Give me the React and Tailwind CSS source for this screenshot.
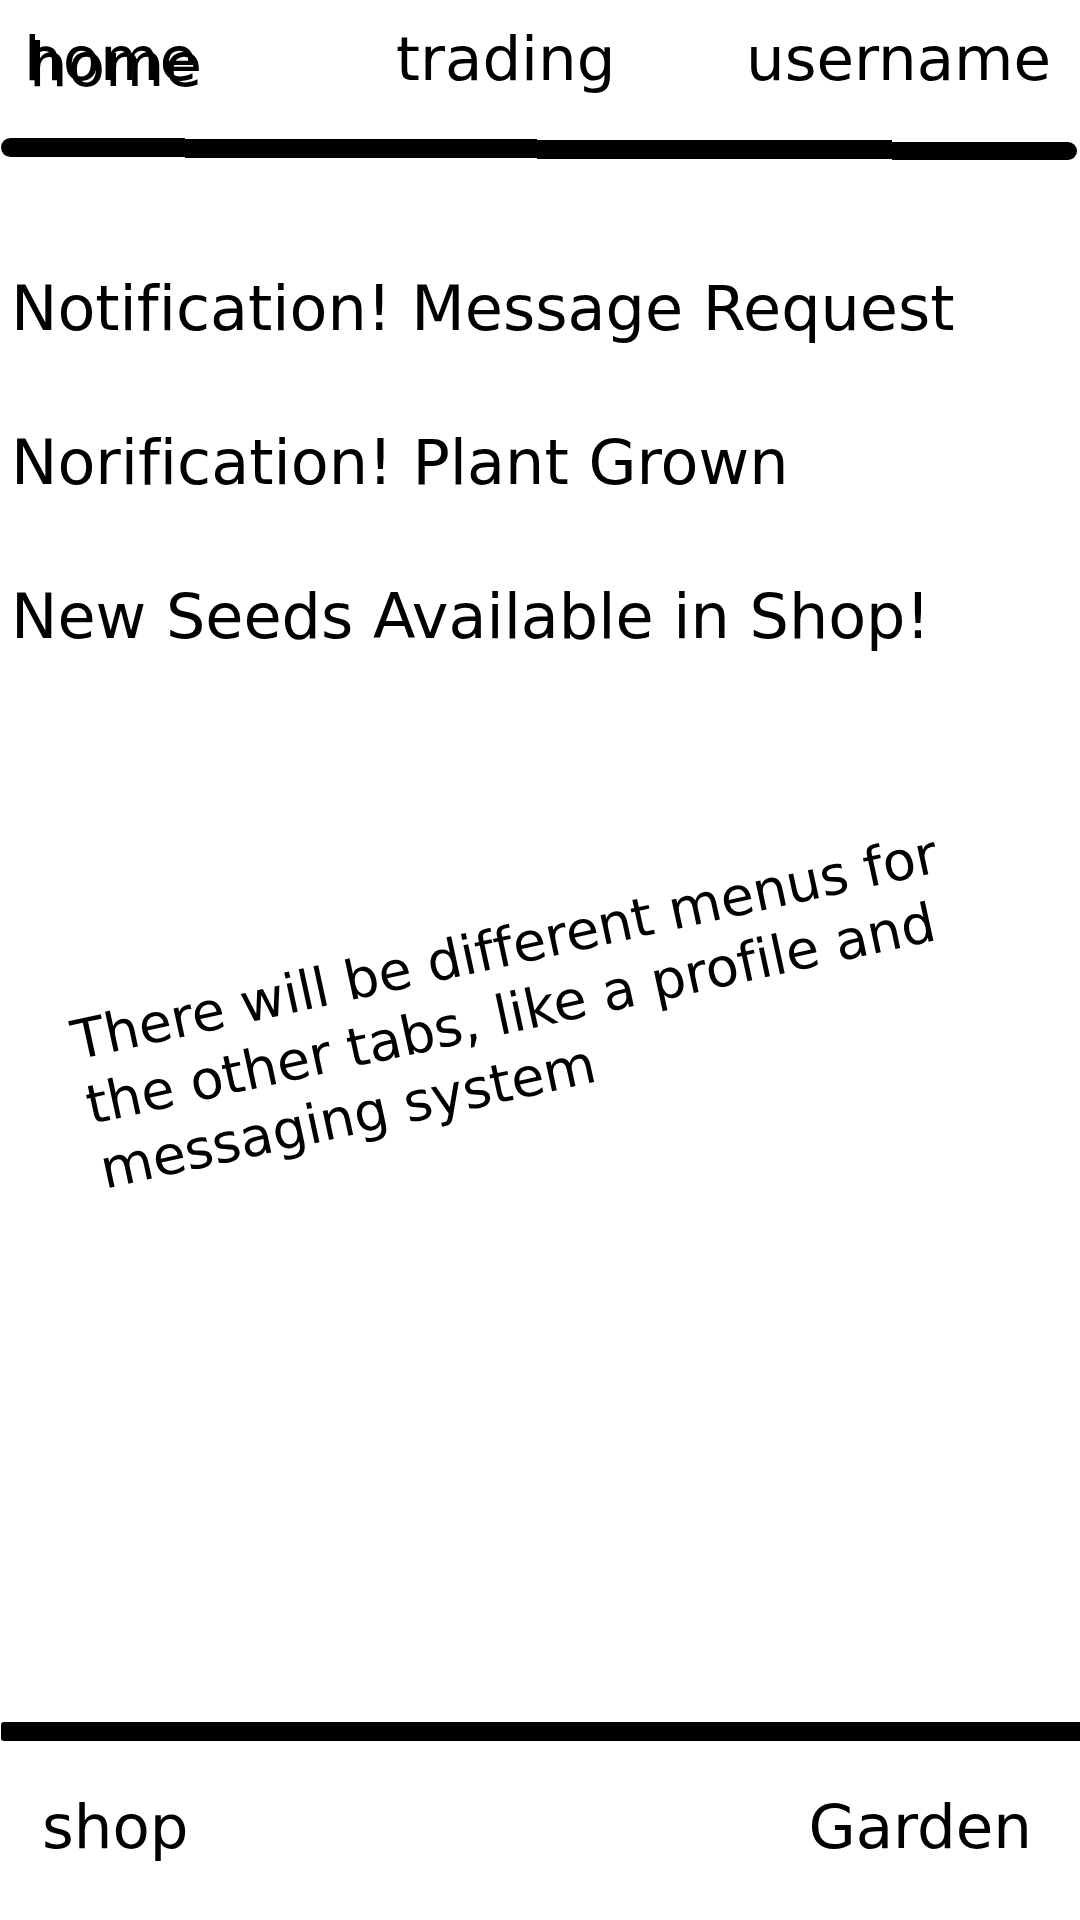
export default function App() {
  return (
    <div className="w-[1080px] h-[1920px] bg-white text-black flex flex-col overflow-hidden font-['DejaVu_Sans',sans-serif] [font-variant-ligatures:none]">
      {/* header */}
      <div className="h-[160px] shrink-0 flex flex-col">
        <div className="h-[138px] pt-[24px] grid grid-cols-[396px_350px_1fr] text-[61px] leading-[70px]">
          <div className="pl-[24px]">
            <span className="relative inline-block">
              home
              <span className="absolute left-[5px] top-[6px]">home</span>
            </span>
          </div>
          <div>trading</div>
          <div>username</div>
        </div>
        <div className="flex items-start h-[22px]">
          <div className="ml-[1px] w-[184px] h-[19px] bg-black rounded-l-full" />
          <div className="mt-[1px] w-[352px] h-[19px] bg-black" />
          <div className="mt-[2px] w-[355px] h-[19px] bg-black" />
          <div className="mt-[4px] w-[185px] h-[18px] bg-black rounded-r-full" />
        </div>
      </div>

      {/* main */}
      <div className="flex-1 flex flex-col">
        <div className="pt-[114px] pl-[11px] flex flex-col gap-[84px] text-[62px] leading-[70px] whitespace-nowrap">
          <p>Notification! Message Request</p>
          <p>Norification! Plant Grown</p>
          <p>New Seeds Available in Shop!</p>
        </div>
        <div className="mt-[358px] ml-[66px] text-[54px] leading-[66px] whitespace-nowrap origin-top-left rotate-[-12.3deg] self-start">
          There will be different menus for
          <br />
          the other tabs, like a profile and
          <br />
          messaging system
        </div>
      </div>

      {/* bottom */}
      <div className="h-[198px] shrink-0 flex flex-col">
        <div className="ml-[1px] h-[19px] bg-black rounded-l-[3px]" />
        <div className="pt-[51px] pl-[42px] pr-[48px] flex justify-between text-[61px] leading-[70px]">
          <span>shop</span>
          <span>Garden</span>
        </div>
      </div>
    </div>
  );
}
